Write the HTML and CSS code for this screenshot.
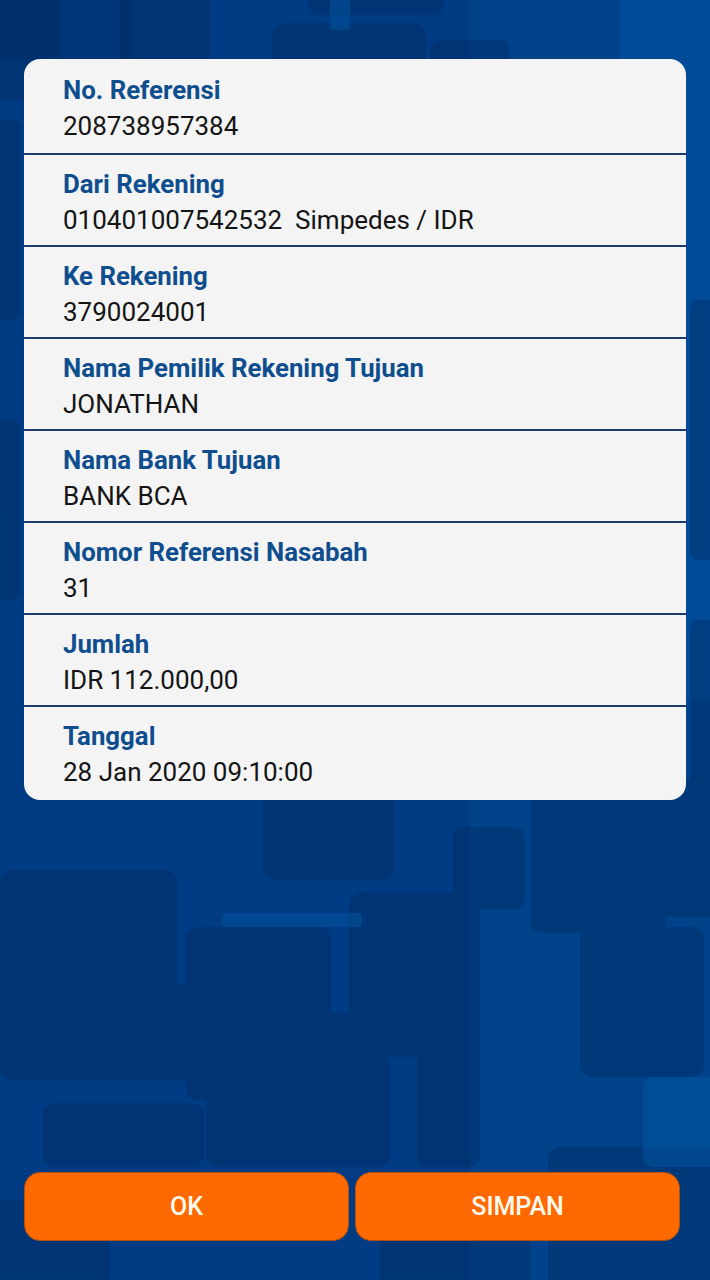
FILE: index.html
```html
<!DOCTYPE html>
<html lang="id">
<head>
<meta charset="utf-8">
<title>Bukti Transfer</title>
<link rel="stylesheet" href="styles.css">
</head>
<body>
<div class="screen">
  <svg class="bg" viewBox="0 0 710 1280" preserveAspectRatio="none" aria-hidden="true">
    <rect x="0" y="0" width="710" height="1280" fill="#003c84"/>
    <rect x="470" y="0" width="240" height="1280" fill="#00468f" opacity="0.7"/>
    <rect x="620" y="0" width="90" height="700" fill="#004e9a" opacity="0.8"/>
    <rect x="0" y="0" width="130" height="60" fill="#00306f" opacity="0.6"/>
    <g fill="#00295f" opacity="0.38">
      <rect x="-10" y="-20" width="70" height="120" rx="12"/>
      <rect x="120" y="-20" width="90" height="90" rx="12"/>
      <rect x="272" y="23" width="154" height="60" rx="12"/>
      <rect x="308" y="-20" width="136" height="35" rx="12"/>
      <rect x="430" y="40" width="80" height="40" rx="10"/>
      <rect x="-10" y="120" width="30" height="200" rx="8"/>
      <rect x="-10" y="420" width="30" height="180" rx="8"/>
      <rect x="690" y="300" width="40" height="260" rx="8"/>
      <rect x="690" y="620" width="40" height="200" rx="8"/>
      <rect x="263" y="760" width="131" height="120" rx="12"/>
      <rect x="349" y="893" width="131" height="164" rx="12"/>
      <rect x="0" y="870" width="177" height="210" rx="12"/>
      <rect x="186" y="927" width="145" height="173" rx="12"/>
      <rect x="102" y="985" width="143" height="95" rx="12"/>
      <rect x="580" y="927" width="124" height="150" rx="12"/>
      <rect x="530" y="780" width="136" height="153" rx="12"/>
      <rect x="634" y="780" width="90" height="137" rx="12"/>
      <rect x="417" y="982" width="63" height="185" rx="10"/>
      <rect x="206" y="1053" width="184" height="114" rx="12"/>
      <rect x="322" y="1013" width="158" height="44" rx="10"/>
      <rect x="453" y="827" width="72" height="83" rx="10"/>
      <rect x="43" y="1103" width="161" height="64" rx="12"/>
      <rect x="548" y="1147" width="170" height="140" rx="12"/>
      <rect x="-10" y="1200" width="120" height="90" rx="12"/>
      <rect x="380" y="1190" width="150" height="100" rx="12"/>
    </g>
    <g fill="#00569f" opacity="0.5">
      <rect x="643" y="1077" width="80" height="90" rx="10"/>
      <rect x="222" y="913" width="140" height="14" rx="4"/>
      <rect x="330" y="0" width="20" height="30"/>
    </g>
  </svg>

  <section class="card">
    <div class="row">
      <div class="label">No. Referensi</div>
      <div class="value">208738957384</div>
    </div>
    <div class="row">
      <div class="label">Dari Rekening</div>
      <div class="value">010401007542532  Simpedes / IDR</div>
    </div>
    <div class="row">
      <div class="label">Ke Rekening</div>
      <div class="value">3790024001</div>
    </div>
    <div class="row">
      <div class="label">Nama Pemilik Rekening Tujuan</div>
      <div class="value">JONATHAN</div>
    </div>
    <div class="row">
      <div class="label">Nama Bank Tujuan</div>
      <div class="value">BANK BCA</div>
    </div>
    <div class="row">
      <div class="label">Nomor Referensi Nasabah</div>
      <div class="value">31</div>
    </div>
    <div class="row">
      <div class="label">Jumlah</div>
      <div class="value">IDR 112.000,00</div>
    </div>
    <div class="row">
      <div class="label">Tanggal</div>
      <div class="value">28 Jan 2020 09:10:00</div>
    </div>
  </section>

  <div class="spacer"></div>

  <div class="actions">
    <button class="btn" type="button">OK</button>
    <button class="btn" type="button">SIMPAN</button>
  </div>
</div>
</body>
</html>
```

FILE: styles.css
```css
* {
  box-sizing: border-box;
}

html, body {
  margin: 0;
  padding: 0;
}

body {
  font-family: Roboto, "Noto Sans", "Liberation Sans", sans-serif;
  background: #003c84;
}

.screen {
  position: relative;
  width: 710px;
  height: 1280px;
  overflow: hidden;
  display: flex;
  flex-direction: column;
  padding: 59px 24px 39px 24px;
}

.bg {
  position: absolute;
  left: 0;
  top: 0;
  width: 710px;
  height: 1280px;
  z-index: 0;
}

.card {
  position: relative;
  z-index: 1;
  background: #f4f4f5;
  border-radius: 16px;
  padding: 2px 0 3px 0;
  display: flex;
  flex-direction: column;
}

.row {
  padding: 11px 20px 7px 39px;
  border-bottom: 2px solid #1e3a6b;
}

.row:first-child {
  padding-bottom: 9px;
}

.row:last-child {
  border-bottom: none;
}

.label {
  font-size: 25.8px;
  line-height: 36px;
  font-weight: 700;
  color: #0f4e8e;
}

.value {
  font-size: 26px;
  line-height: 36px;
  font-weight: 400;
  color: #141414;
  white-space: pre;
}

.spacer {
  flex: 1;
}

.actions {
  position: relative;
  z-index: 1;
  display: flex;
  gap: 6px;
  padding-right: 6px;
}

.btn {
  flex: 1;
  height: 69px;
  border: 1px solid #b5500c;
  border-radius: 16px;
  background: #ff6a00;
  color: #fffaf0;
  font-family: Roboto, "Noto Sans", "Liberation Sans", sans-serif;
  font-size: 25px;
  font-weight: 500;
  padding: 0;
}
```
